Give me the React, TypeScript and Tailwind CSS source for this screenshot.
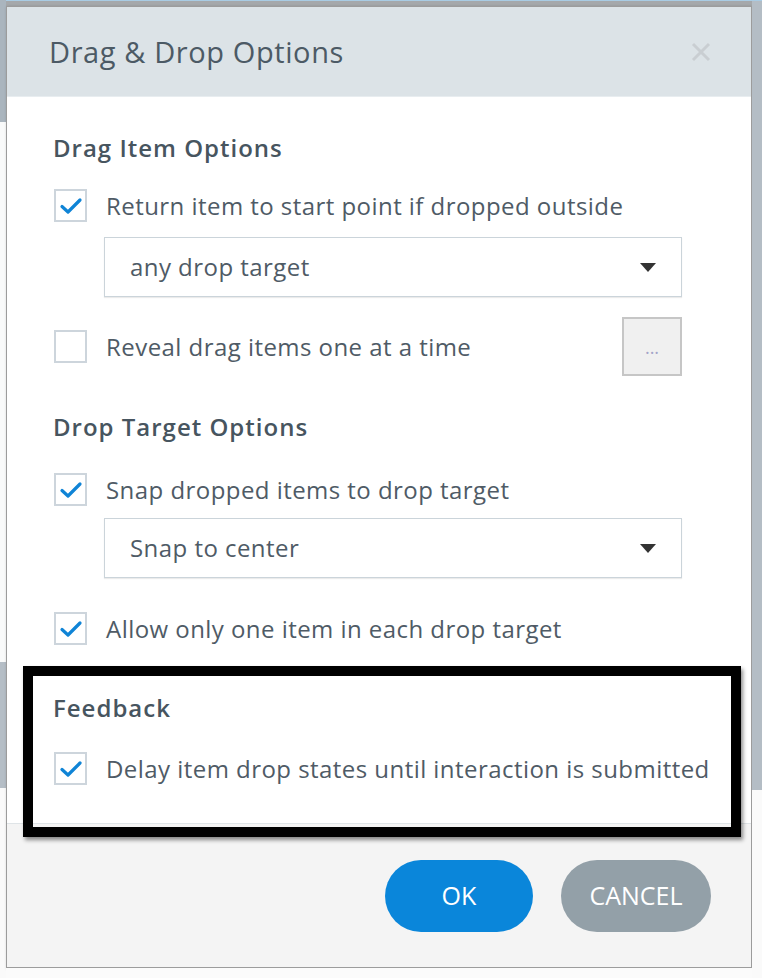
import React from 'react';

const font = { fontFamily: '"Open Sans", "Noto Sans", sans-serif' };

const Check = ({ checked }: { checked: boolean }) => (
  <div className="w-[33px] h-[33px] shrink-0 border-2 border-[#cdd5dc] bg-white flex items-center justify-center">
    {checked && (
      <svg width="24" height="20" viewBox="0 0 24 20">
        <path d="M3 10.5 L9 16 L21 4" fill="none" stroke="#0f84d6" strokeWidth="3.2" strokeLinecap="round" strokeLinejoin="round" />
      </svg>
    )}
  </div>
);

const CheckRow = ({ checked, label, className = '' }: { checked: boolean; label: string; className?: string }) => (
  <div className={`flex items-center gap-[19px] ${className}`}>
    <Check checked={checked} />
    <span className="text-[24px] leading-[33px] tracking-[0.45px] text-[#4f5b66]">{label}</span>
  </div>
);

const Select = ({ value, className = '' }: { value: string; className?: string }) => (
  <div
    className={`h-[60px] ml-[51px] mr-[69px] border border-[#cbd4da] shadow-[0_1px_1px_rgba(0,0,0,0.08)] bg-white flex items-center justify-between pl-[25px] pr-[25px] ${className}`}
  >
    <span className="text-[24px] tracking-[0.45px] text-[#4f5b66]">{value}</span>
    <svg width="16" height="9" viewBox="0 0 16 9">
      <path d="M0 0 H16 L8 9 Z" fill="#333" />
    </svg>
  </div>
);

const Heading = ({ children, className = '' }: { children: React.ReactNode; className?: string }) => (
  <div className={`text-[24px] leading-[32px] font-semibold tracking-[1px] text-[#47555f] ${className}`}>{children}</div>
);

export default function App() {
  return (
    <div className="relative w-[762px] h-[978px] overflow-hidden flex bg-white" style={font}>
      {/* left page strip */}
      <div className="w-[6px] flex flex-col">
        <div className="h-[122px] bg-[#aab5be]" />
        <div className="h-[540px] bg-[#f9fafa]" />
        <div className="h-[126px] bg-[#b5bec6]" />
        <div className="flex-1 bg-[#fafafa]" />
      </div>

      {/* middle column */}
      <div className="w-[746px] flex flex-col">
        <div className="h-[6px] flex flex-col">
          <div className="h-[1px] bg-[#a9cce4]" />
          <div className="flex-1 bg-[#a5a8ab]" />
        </div>

        <div className="h-[962px] border border-[#9c9c9c] flex flex-col bg-white shadow-[1px_1px_3px_rgba(0,0,0,0.25)]">
          {/* Header */}
          <div className="h-[90px] shrink-0 bg-[#dce3e7] flex items-center justify-between pl-[42px] pr-[40px] border-b border-[#e8edf0]">
            <h1 className="text-[29px] tracking-[0.6px] text-[#4c5a65] font-normal">Drag &amp; Drop Options</h1>
            <svg width="20" height="20" viewBox="0 0 20 20">
              <path d="M2 2 L18 18 M18 2 L2 18" stroke="#c9ced2" strokeWidth="3" />
            </svg>
          </div>

          {/* Body */}
          <div className="flex-1 flex flex-col pl-[46px] pt-[35px]">
            <Heading>Drag Item Options</Heading>
            <CheckRow checked label="Return item to start point if dropped outside" className="mt-[25px] ml-[1px]" />
            <Select value="any drop target" className="mt-[15px]" />
            <div className="mt-[20px] h-[59px] flex items-center justify-between mr-[69px] ml-[1px]">
              <CheckRow checked={false} label="Reveal drag items one at a time" />
              <div className="w-[60px] h-[59px] bg-[#f0f0f0] border-2 border-[#c6c6c6] flex items-center justify-center text-[#a4a4c8] text-[18px] leading-none">
                ...
              </div>
            </div>
            <Heading className="mt-[35px]">Drop Target Options</Heading>
            <CheckRow checked label="Snap dropped items to drop target" className="mt-[30px] ml-[1px]" />
            <Select value="Snap to center" className="mt-[12px]" />
            <CheckRow checked label="Allow only one item in each drop target" className="mt-[34px] ml-[1px]" />
            <Heading className="mt-[47px]">Feedback</Heading>
            <CheckRow checked label="Delay item drop states until interaction is submitted" className="mt-[28px] ml-[1px]" />
          </div>

          {/* Footer */}
          <div className="h-[144px] shrink-0 bg-[#f4f4f4] border-t border-[#dfe4e7] flex items-start justify-end gap-[28px] pt-[36px] pr-[40px]">
            <button className="w-[148px] h-[72px] rounded-full bg-[#0a86da] text-white text-[25px]">OK</button>
            <button className="w-[150px] h-[72px] rounded-full bg-[#93a0a8] text-white text-[25px]">CANCEL</button>
          </div>
        </div>

        <div className="flex-1 bg-[#fbfbfb]" />
      </div>

      {/* right page strip */}
      <div className="flex-1 flex flex-col">
        <div className="h-[1px] bg-[#a9cce4]" />
        <div className="h-[789px] bg-[#b4bdc5]" />
        <div className="flex-1 bg-[#fafafa]" />
      </div>

      {/* annotation box */}
      <div className="absolute left-[23px] top-[666px] w-[718px] h-[171px] border-[10px] border-black shadow-[2px_3px_4px_rgba(0,0,0,0.45)]" />
    </div>
  );
}
